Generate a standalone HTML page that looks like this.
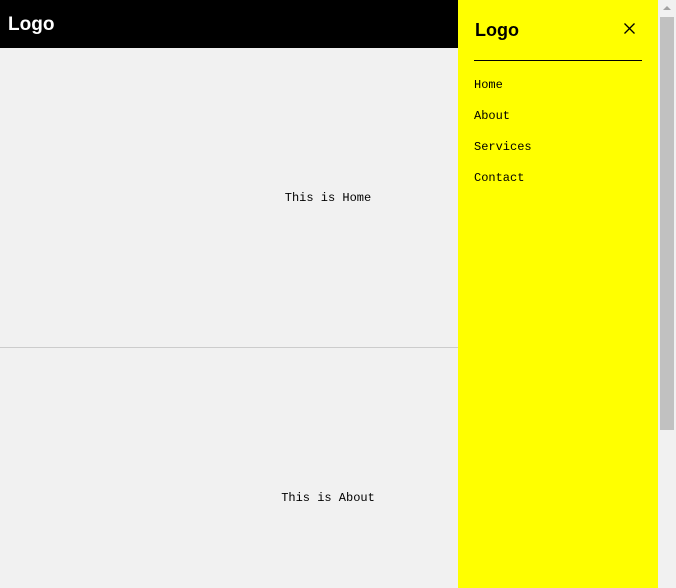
<!DOCTYPE html>
<html><head><style>
*{margin:0;padding:0;box-sizing:border-box}
body{width:676px;height:588px;overflow:hidden;background:#f1f1f1;position:relative;font-family:"Liberation Mono",monospace}
.hdr{position:absolute;left:0;top:0;width:658px;height:48px;background:#000;color:#fff;font:bold 19px "Liberation Sans",sans-serif;padding:14px 0 0 8px}
.sec{position:absolute;left:-1px;width:658px;text-align:center;font-size:12px;color:#000}
.line{position:absolute;left:0;top:347px;width:458px;height:1px;background:#ccc}
.side{position:absolute;left:458px;top:0;width:200px;height:588px;background:#ff0}
.side .lg{position:absolute;left:17px;top:20px;font:bold 18px "Liberation Sans",sans-serif}
.side .x{position:absolute;left:166px;top:23px}
.side .hr{position:absolute;left:16px;top:60px;width:168px;height:1px;background:#000}
.side a{position:absolute;left:16px;font-size:12px;color:#000;text-decoration:none}
.sb{position:absolute;left:658px;top:0;width:18px;height:588px;background:#f1f1f1}
.th{position:absolute;left:660px;top:17px;width:14px;height:413px;background:#c1c1c1}
</style></head><body>
<div class="hdr">Logo</div>
<div class="sec" style="top:191px">This is Home</div>
<div class="line"></div>
<div class="sec" style="top:491px">This is About</div>
<div class="side">
<div class="lg">Logo</div>
<svg class="x" width="11" height="11" viewBox="0 0 11 11"><path d="M0.5 0.5L10.5 10.5M10.5 0.5L0.5 10.5" stroke="#000" stroke-width="1.3"/></svg>
<div class="hr"></div>
<a style="top:78px">Home</a>
<a style="top:109px">About</a>
<a style="top:140px">Services</a>
<a style="top:171px">Contact</a>
</div>
<div class="sb"></div>
<svg style="position:absolute;left:662px;top:5px" width="10" height="6"><path d="M1 5L5 1L9 5Z" fill="#a3a3a3"/></svg>
<div class="th"></div>
</body></html>
